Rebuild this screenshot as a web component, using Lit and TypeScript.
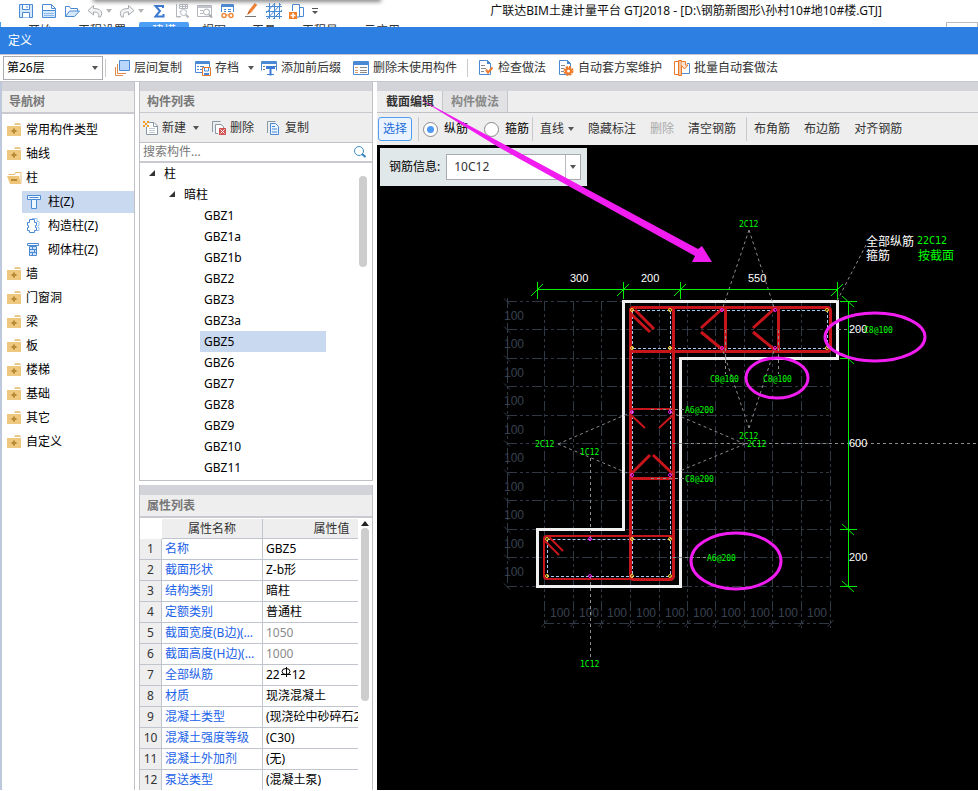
import { LitElement, html, svg, css, nothing } from "lit";
import { customElement, state } from "lit/decorators.js";
import { classMap } from "lit/directives/class-map.js";

const shared = css`
  * { box-sizing: border-box; }
  button, input, select {
    font: inherit; color: inherit; margin: 0; padding: 0;
    border: 0; background: none; border-radius: 0; outline: 0;
  }
  button { display: flex; align-items: center; white-space: nowrap; }
  svg { display: block; flex: none; }
`;

/* ---------- icons ---------- */
const ic = (body: unknown, w = 16, h = 16) =>
  html`<svg width=${w} height=${h} viewBox="0 0 ${w} ${h}" fill="none" aria-hidden="true">${body}</svg>`;

const B = "#4a8ad4";
const caret = html`<svg width="6" height="4" viewBox="0 0 6 4" aria-hidden="true"><path d="M0 0h6L3 4z" fill="#555"/></svg>`;
const caretPale = html`<svg width="6" height="4" viewBox="0 0 6 4" aria-hidden="true"><path d="M0 0h6L3 4z" fill="#b4b4b4"/></svg>`;
const caretBar = html`<svg width="6" height="7" viewBox="0 0 6 7" aria-hidden="true"><path d="M0 0h6v1H0zM0 3h6L3 6z" fill="#555"/></svg>`;

const icons = {
  save: ic(svg`<path d="M1.5 1.5h13v13h-13z" fill="#d6e8fc" stroke=${B}/><path d="M4.5 1.5h7v5h-7zM4.5 14.5v-5h7v5" fill="#fff" stroke=${B}/><path d="M9 3v2" stroke=${B}/>`),
  saveAs: ic(svg`<path d="M1.5 7.5v-6h9l4 4v2" fill="#fff" stroke=${B}/><path d="M10.5 1.5v4h4" stroke=${B}/><path d="M1.5 7.5h13v7h-13z" fill="#d6e8fc" stroke=${B}/><path d="M3 10.500h10M3 12.500h10" stroke="#8db9ea"/>`),
  open: ic(svg`<path d="M1.500 13.500V3.500h4l1 2h7v2.500" fill="#fff" stroke=${B}/><path d="M1.500 13.500l4-5.500h10l-5 5.500z" fill="#d6e8fc" stroke=${B}/>`),
  undo: ic(svg`<path d="M6.500 2.500l-5.500 5 5.500 4.500v-3c4 0 6 1 5 5h2c3-5 0-8.500-7-8.500z" fill="#f4f4f4" stroke="#a6abb2"/>`),
  redo: ic(svg`<path d="M9.500 2.500l5.500 5-5.500 4.500v-3c-4 0-6 1-5 5h-2c-3-5 0-8.500 7-8.500z" fill="#f4f4f4" stroke="#a6abb2"/>`),
  sigma: ic(svg`<path d="M12 5V3H4.500l4.500 5-4.500 5.500H12.500v-2.500" stroke="#3a78cf" stroke-width="2"/>`),
  tbl1: ic(svg`<path d="M2.500 1v13h4M2 13.500h5M5.500 1.500h8v4h-8zM5.500 8.500h3M5.500 3.500h8M8.500 1v4M11.500 1v4" stroke="#b3b7bd"/><circle cx="9.500" cy="9.500" r="3" fill="#fff" stroke="#b3b7bd"/><path d="M12 12l2.500 2.500" stroke="#b3b7bd" stroke-width="2"/>`),
  tbl2: ic(svg`<path d="M.5 2.500h14v11H.5z" stroke="#b3b7bd"/><path d="M1 3h13v2H1z" fill="#c2c6cb"/><path d="M3 7.500h3M3 10.500h3" stroke="#b3b7bd"/><circle cx="9.500" cy="9" r="3" fill="#fff" stroke="#a6abb2"/><path d="M12 11.500l3 3" stroke="#a6abb2" stroke-width="2"/>`),
  glasses: ic(svg`<path d="M1.500 9V1.500h12V9" stroke=${B}/><path d="M2 2h11v2H2z" fill=${B}/><path d="M4 6.500h2M8 6.500h3M4 8.500h2M8 8.500h3" stroke=${B}/><circle cx="4" cy="12.500" r="2" fill="#fff" stroke="#ee8a3c" stroke-width="1.500"/><circle cx="11" cy="12.500" r="2" fill="#fff" stroke="#ee8a3c" stroke-width="1.500"/><path d="M6 12h3" stroke="#ee8a3c"/>`),
  brush: ic(svg`<path d="M13 1L7 8.500" stroke="#ee8136" stroke-width="3"/><path d="M6 7.500l-2 4.500 4-2.500z" fill="#c55a1a"/><path d="M2 13.500h11" stroke="#777"/>`),
  grid: ic(svg`<path d="M0 3.500h16M0 8.500h16M0 13.500h16M3.500 0v16M8.500 0v16M13.500 0v16M0 10L9 0M1 16L15 1M7 16l9-9" stroke=${B}/>`),
  addDoc: ic(svg`<path d="M3.500 8V1.500h7V14H8" fill="#fff" stroke=${B}/><path d="M10.500 4.500h4v9h-4" stroke=${B}/><path d="M0 9h8v7H0z" fill="#f07f27"/><path d="M4 10v5M1.500 12.500h5" stroke="#fff" stroke-width="1.500"/>`),
  layerCopy: ic(svg`<path d="M5.500 .5h10v10h-10z" fill="#b9d6fa" stroke=${B}/><path d="M3.500 4v9.500H12M1.500 7v8.500H9" stroke="#e08a4c"/>`),
  archive: ic(svg`<path d="M.5 1.500h14v11H.5z" fill="#fff" stroke=${B}/><path d="M1 1h13v3H1z" fill=${B}/><path d="M2 6.500h2M5 6.500h4M2 9.500h2M5 9.500h2" stroke=${B}/><path d="M7.500 7.500h8v8h-8z" fill="#fff" stroke="#e07a30"/><path d="M9.500 8v3h4V8" stroke=${B}/><path d="M9 13h5v2H9z" fill=${B}/>`),
  prefix: ic(svg`<path d="M.5 10.500v-9h15v9" fill="#fff" stroke=${B}/><path d="M1 1h14v3H1z" fill=${B}/><path d="M2 6.500h2M2 9.500h2M13 6.500h2" stroke="#777"/><path d="M5 6h9v3h-3.500v6.500h-2V9H5z" fill="#3a7bd5"/><path d="M6 14.500h7" stroke="#3a7bd5"/>`),
  unused: ic(svg`<path d="M.5 1.500h15v13H.5z" fill="#fff" stroke=${B}/><path d="M1 1h14v4H1z" fill=${B}/><path d="M2 7.500h3M2 10.500h3M2 12.500h3" stroke="#d99a6a"/><path d="M7 7.500h7M7 10.500h7M7 12.500h7" stroke="#888"/>`),
  check: ic(svg`<path d="M1.500 .5h8l3 3v11h-11z" fill="#fff" stroke=${B}/><path d="M9 0l4 4H9z" fill=${B}/><path d="M3 5.500h4M3 8.500h5M3 11.500h3" stroke="#888"/><path d="M8 9.500l2 3 4.500-5" stroke="#f0792a" stroke-width="2"/>`),
  gearDoc: ic(svg`<path d="M1.500 .5h8l3 3v11h-11z" fill="#fff" stroke=${B}/><path d="M9 0l4 4H9z" fill=${B}/><path d="M3 5.500h4M3 8.500h3M3 11.500h3" stroke="#888"/><circle cx="10.500" cy="11" r="4" stroke="#f0792a" stroke-width="2" stroke-dasharray="2 1.140"/><circle cx="10.500" cy="11" r="2.500" fill="#fff" stroke="#f0792a" stroke-width="2"/>`),
  batch: ic(svg`<path d="M.5 1.500h4v13h-4z" fill="#fff" stroke="#ea7a2b"/><path d="M4.500 .5h3v15h-3z" fill="#f5c19a" stroke="#ea7a2b"/><path d="M8 13.500h7.500V3.500H13" stroke=${B}/><path d="M7.500 1.500h4V5h2.500l-3.500 4L7.500 5.500" fill="#fbe3d0" stroke="#ea7a2b"/>`),
  folder: ic(svg`<path d="M8 1h5v1H8zM7 2h7v1H7z" fill="#e9c98c"/><path d="M0 4h14v10H0z" fill="#efc880"/><path d="M7 6.500v5M4.500 9h5" stroke="#b98a36" stroke-width="2"/>`),
  folderOpen: ic(svg`<path d="M1.500 5V4.500h6l1-2h5.500v11" fill="#fff" stroke="#e8bd70"/><path d="M0 6h12l2 8H3z" fill="#efc57a"/><path d="M4 10h6" stroke="#b98a36" stroke-width="2"/>`),
  col: ic(svg`<path d="M1.500 1.500h13v4h-13z" fill="#eef6ff" stroke=${B}/><path d="M3.500 3.500h9" stroke=${B}/><path d="M5.500 5.500h5v9h-5z" fill="#eef6ff" stroke=${B}/>`),
  colStruct: ic(svg`<path d="M6 .5h5v3h2v4h-1v2h1v3h-2" stroke="#9cc3ee"/><path d="M3.500 1.500h5v3h2v3h-1v2h1v3h-2v2h-5v-2h-2v-3h1v-2h-1v-3h2z" fill="#fff" stroke=${B}/>`),
  colBrick: ic(svg`<path d="M1.500 1.500h11v2h-11z" fill="#fff" stroke=${B}/><path d="M3.500 4.500h7v9h-7z" fill="#cfe3fa" stroke=${B}/><path d="M4 7.500h6M4 10.500h6M6.500 5v2M8.500 8v2M6.500 11v2" stroke=${B}/>`),
  newDoc: ic(svg`<path d="M6 2.500h5l3.500 3.500v8.500h-11V7" fill="#fff" stroke="#8a99a8"/><path d="M10.500 2.500v4h4" stroke="#8a99a8"/><path d="M6 8.500h6M6 10.500h6M6 12.500h6" stroke="#c4cbd2"/><path d="M0 1h2v2H0zM4 1h2v2H4zM2 3h2v2H2zM0 5h2v2H0zM4 5h2v2H4z" fill="#f09a28"/>`),
  del: ic(svg`<path d="M1.500 12V1.500h8" stroke="#8a99a8"/><path d="M7 13.500H4.500v-9H10l2.500 2V8" fill="#fff" stroke="#8a99a8"/><path d="M8 8h7v7H8z" fill="#d25555"/><path d="M9.500 9.500l4 4M13.500 9.500l-4 4" stroke="#fff"/>`),
  copy: ic(svg`<path d="M1.500 13V1.500h8" stroke="#8a99a8"/><path d="M4.500 3.500h5l3 3v8h-8z" fill="#eaf3fe" stroke=${B}/><path d="M6 6.500h3M6 9h5M6 12h5" stroke=${B}/>`),
  search: ic(svg`<circle cx="7" cy="7" r="4.500" stroke="#3d8fc6"/><path d="M10 10l3.500 3" stroke="#2f83c0" stroke-width="2"/>`),
};

const rebarMark = html`<svg class="rebar" width="12" height="12" viewBox="0 0 12 12" fill="none" role="img" aria-label="C"><ellipse cx="6" cy="4.500" rx="4" ry="3" stroke="#000"/><path d="M6.500 0v10M1 7.500h10" stroke="#000"/></svg>`;

/* ---------- 导航树 ---------- */
@customElement("nav-tree")
class NavTree extends LitElement {
  @state() private selected = "柱(Z)";
  static styles = [shared, css`
    :host { display: flex; flex-direction: column; background: #fff; padding-top: 4px; }
    .row { width: 100%; height: 24px; padding-left: 5px; gap: 3px; color: #000; text-align: left; }
    .child { height: 22px; width: auto; margin: 1px 0 1px 20px; gap: 6px; padding-left: 4px; }
    .on { background: #c9d9f0; }
  `];
  private items: [string, keyof typeof icons, boolean][] = [
    ["常用构件类型", "folder", false], ["轴线", "folder", false], ["柱", "folderOpen", false],
    ["柱(Z)", "col", true], ["构造柱(Z)", "colStruct", true], ["砌体柱(Z)", "colBrick", true],
    ["墙", "folder", false], ["门窗洞", "folder", false], ["梁", "folder", false], ["板", "folder", false],
    ["楼梯", "folder", false], ["基础", "folder", false], ["其它", "folder", false], ["自定义", "folder", false],
  ];
  render() {
    return this.items.map(([t, i, child]) => html`<button
      class=${classMap({ row: true, child, on: t === this.selected })}
      @click=${() => (this.selected = t)}>${icons[i]}${t}</button>`);
  }
}

/* ---------- 构件列表 ---------- */
@customElement("member-list")
class MemberList extends LitElement {
  @state() private selected = "GBZ5";
  static styles = [shared, css`
    :host { display: flex; flex-direction: column; }
    .tools { display: flex; height: 30px; background: #eee; border-bottom: 1px solid #c0c1c6; padding-left: 3px; gap: 12px; color: #333; }
    .tools button { gap: 3px; }
    .tools .more { margin-left: 4px; }
    .search { display: flex; height: 20px; border-bottom: 2px solid #c9cacf; background: #fff; padding: 0 4px 0 3px; align-items: center; }
    .search input { flex: 1; min-width: 0; }
    .search input::placeholder { color: #777; opacity: 1; }
    .tree { display: flex; background: #fff; justify-content: space-between; color: #000; height: 317px; }
    .items { flex: 1; }
    .branch { height: 21px; gap: 8px; padding-left: 9px; }
    .sub { padding-left: 29px; }
    .leaf { height: 21px; width: 126px; margin-left: 60px; padding-left: 4px; }
    .on { background: #c9d9f0; }
    .thumb { width: 8px; height: 91px; margin: 13px 5px 0 0; border-radius: 4px; background: #cdcdcd; }
  `];
  render() {
    const tri = html`<svg width="7" height="7" viewBox="0 0 7 7" aria-hidden="true"><path d="M6 0v6H0z" fill="#333"/></svg>`;
    const names = ["GBZ1", "GBZ1a", "GBZ1b", "GBZ2", "GBZ3", "GBZ3a", "GBZ5", "GBZ6", "GBZ7", "GBZ8", "GBZ9", "GBZ10", "GBZ11"];
    return html`
      <div class="tools">
        <button>${icons.newDoc}新建<span class="more">${caret}</span></button>
        <button>${icons.del}删除</button>
        <button>${icons.copy}复制</button>
      </div>
      <div class="search"><input type="search" placeholder="搜索构件..." aria-label="搜索构件"><button aria-label="搜索">${icons.search}</button></div>
      <div class="tree">
        <div class="items">
          <button class="branch">${tri}柱</button>
          <button class="branch sub">${tri}暗柱</button>
          ${names.map((n) => html`<button class=${classMap({ leaf: true, on: n === this.selected })} @click=${() => (this.selected = n)}>${n}</button>`)}
        </div>
        <div class="thumb"></div>
      </div>`;
  }
}

/* ---------- 属性列表 ---------- */
@customElement("property-grid")
class PropertyGrid extends LitElement {
  static styles = [shared, css`
    :host { display: flex; background: #fff; overflow: hidden; padding-top: 1px; }
    .clip { flex: 1; overflow: hidden; }
    table { width: 261px; table-layout: fixed; border-collapse: separate; border-spacing: 0; }
    .num { width: 22px; }
    .name { width: 101px; }
    th, td { height: 21px; padding: 0; font-weight: 400; border-right: 1px solid #c0c4cc; border-bottom: 1px solid #c0c4cc; white-space: nowrap; overflow: hidden; text-overflow: ellipsis; line-height: 20px; }
    thead th { height: 20px; line-height: 19px; background: #eee; color: #333; }
    thead td { height: 20px; line-height: 19px; border-color: #fff; }
    tbody th { background: #eee; color: #333; text-align: center; }
    tbody td { padding-left: 3px; color: #000; }
    tbody .key { color: #1b62e8; }
    tbody .dim { color: #8a8a8a; }
    .rebar { display: inline-block; vertical-align: 0; }
    .bar { width: 14px; display: flex; flex-direction: column; align-items: center; padding-top: 2px; gap: 2px; }
    .thumb { width: 8px; height: 173px; border-radius: 4px; background: #cdcdcd; }
  `];
  render() {
    const rows: [string, unknown, boolean?][] = [
      ["名称", "GBZ5"], ["截面形状", "Z-b形"], ["结构类别", "暗柱"], ["定额类别", "普通柱"],
      ["截面宽度(B边)(mm)", "1050", true], ["截面高度(H边)(mm)", "1000", true],
      ["全部纵筋", html`22${rebarMark}12`], ["材质", "现浇混凝土"], ["混凝土类型", "(现浇砼中砂碎石20mm)"],
      ["混凝土强度等级", "(C30)"], ["混凝土外加剂", "(无)"], ["泵送类型", "(混凝土泵)"],
    ];
    return html`
      <div class="clip"><table>
        <colgroup><col class="num"><col class="name"><col></colgroup>
        <thead><tr><td></td><th>属性名称</th><th>属性值</th></tr></thead>
        <tbody>${rows.map(([k, v, dim], i) => html`<tr><th>${i + 1}</th><td class="key">${k}</td><td class=${dim ? "dim" : nothing}>${v}</td></tr>`)}</tbody>
      </table></div>
      <div class="bar"><svg width="8" height="5" viewBox="0 0 8 5" aria-hidden="true"><path d="M0 5h8L4 0z" fill="#222"/></svg><div class="thumb"></div></div>`;
  }
}

/* ---------- 截面编辑画布 ---------- */
const XS = [544, 573, 601, 630, 659, 687, 715, 744, 772, 801, 830];
const YS = [301, 329, 358, 386, 415, 443, 472, 500, 529, 557, 586];

@customElement("section-canvas")
class SectionCanvas extends LitElement {
  static styles = [shared, css`
    :host { display: block; position: relative; background: #000; min-height: 560px; }
    .cad, .marks { position: absolute; inset: 0; width: 100%; height: 100%; }
    .marks { overflow: visible; pointer-events: none; }
    text { dominant-baseline: central; }
    .grid { stroke: #303844; stroke-dasharray: 10 3 3 3 3 3; fill: none; }
    .tick { stroke: #303844; fill: none; }
    .gray { fill: #39424f; font: 12px "Liberation Sans", sans-serif; }
    .wall { stroke: #f0f0f0; stroke-width: 3; fill: none; }
    .bar { stroke: #c8151c; stroke-width: 3; fill: none; }
    .thin { stroke-width: 2; }
    .core { stroke: #a9c8f2; stroke-dasharray: 3 2; fill: none; }
    .dimn { stroke: #00f000; fill: none; }
    .lead { stroke: #8c8c8c; stroke-dasharray: 3 3; fill: none; }
    .y { stroke: #ffd92e; fill: none; }
    .m { stroke: #f01cf0; fill: none; }
    .num { fill: #fff; font: 11px "Liberation Sans", sans-serif; }
    .tag { fill: #00ff00; font: 8px "DejaVu Sans Mono", monospace; }
    .mono { fill: #00ff00; font: 10px "DejaVu Sans Mono", monospace; }
    .cn { fill: #fff; font: 12px "Noto Sans CJK SC", sans-serif; }
    .g { fill: #00ff00; }
    .pink { stroke: #f01cf0; stroke-width: 3; fill: none; }
    .arrow { fill: #f01cf0; }
    .info { position: relative; display: inline-flex; align-items: center; margin: 3px; height: 38px; padding: 0 6px 0 9px; gap: 6px; background: #e1e8ea; color: #000; }
    .combo { display: flex; width: 135px; height: 26px; border: 1px solid #a9abb0; background: #fff; }
    .combo input { flex: 1; min-width: 0; padding-left: 7px; color: #333; }
    .combo button { width: 15px; justify-content: center; border-left: 1px solid #b9bbc0; }
  `];
  private tags: [string, number, number][] = [
    ["2C12", 739, 224], ["C8@100", 710, 379], ["C8@100", 763, 379], ["C8@100", 864, 330],
    ["A6@200", 685, 410], ["2C12", 739, 436], ["2C12", 747, 444], ["C8@200", 685, 479],
    ["2C12", 535, 444], ["1C12", 580, 452], ["A6@200", 707, 558], ["1C12", 580, 664],
  ];
  render() {
    const yellow = [[632, 310], [670, 310], [632, 348], [670, 348], [827, 310], [827, 348], [547, 539], [632, 539], [670, 539], [547, 576], [632, 576], [670, 576]];
    const magenta = [[722, 310], [722, 348], [775, 310], [775, 348], [632, 412], [670, 412], [632, 475], [670, 475], [590, 539], [590, 576]];
    return html`
      <svg class="cad" role="img" aria-label="柱截面">
        <g transform="translate(-377 -145)">
          ${XS.map((x) => svg`<path class="grid" d="M${x}.5 301V628"/><path class="tick" d="M${x - 3}.5 627l6-7"/>`)}
          ${YS.map((y) => svg`<path class="grid" d="M507 ${y}.5H830"/><path class="tick" d="M504 ${y - 3}.5l6 6"/>`)}
          <path class="grid" d="M507.5 298V588M544 623.5H830"/>
          ${YS.slice(0, 10).map((y) => svg`<text class="gray" x="504" y=${y + 15}>100</text>`)}
          ${XS.slice(0, 10).map((x) => svg`<text class="gray" x=${x + 6} y="613">100</text>`)}
          <path class="wall" d="M623.5 301.5H837.5V358.5H680.5V586.5H537.5V529.5H623.5Z"/>
          <path class="core" d="M632 310.5H827.5V348.5H632M632.5 311V576.5M670.5 311V576.5M547.5 539.5H670M547.5 540V576.5H670"/>
          <rect class="bar" x="630.5" y="307.5" width="200" height="44" rx="3"/>
          <rect class="bar" x="630.5" y="307.5" width="43" height="272" rx="3"/>
          <rect class="bar thin" x="544" y="536" width="129" height="43" rx="3"/>
          <path class="bar" d="M725.5 308V351M778.5 308V351M722 309L701 328M701 332L723 350M774 309L753 328M753 332L775 350M635 310L654 329M630 313L650 332M631 478.5H673M632 473L650 455M653 455L672 473"/>
          <path class="bar thin" d="M631 409H673M631 415L645 428M673 415L659 428M549 537L563 551M545 541L559 555"/>
          <path class="lead" d="M749 230L722 310M749 230L775 310M749 428L722 348M749 428L775 348M725.5 330V374M778.5 330V374M838 329.5H864M651 409.5H685M651 478.5H685M673 557.5H707M558 444L632 412M558 444L632 475M745 444L670 412M745 444L670 475M673 443.5H2000M590.5 458V539M590.5 576V657M866 245L837 301"/>
          ${yellow.map(([x, y]) => svg`<circle class="y" cx=${x} cy=${y} r="1.5"/>`)}
          ${magenta.map(([x, y]) => svg`<circle class="m" cx=${x} cy=${y} r="1.5"/>`)}
          <path class="dimn" d="M537 289.5H838M848.5 301V587"/>
          ${[537, 623, 680, 837].map((x) => svg`<path class="dimn" d="M${x}.5 282V299M${x - 6} 296L${x + 6} 284"/>`)}
          ${[301, 358, 529, 586].map((y) => svg`<path class="dimn" d="M840 ${y}.5H857M842 ${y - 5}L854 ${y + 6}"/>`)}
          <text class="num" x="570" y="278">300</text><text class="num" x="641" y="278">200</text><text class="num" x="748" y="278">550</text>
          <text class="num" x="849" y="329">200</text><text class="num" x="849" y="443">600</text><text class="num" x="849" y="557">200</text>
          ${this.tags.map(([t, x, y]) => svg`<text class="tag" x=${x} y=${y}>${t}</text>`)}
          <text class="cn" x="866" y="240">全部纵筋</text><text class="cn" x="866" y="254">箍筋</text>
          <text class="mono" x="917" y="240">22C12</text><text class="cn g" x="918" y="254">按截面</text>
        </g>
      </svg>
      <div class="info">
        <label for="rebar">钢筋信息:</label>
        <div class="combo"><input id="rebar" .value=${"10C12"}><button aria-label="选择钢筋">${caret}</button></div>
      </div>
      <svg class="marks" aria-hidden="true">
        <g transform="translate(-377 -145)">
          <ellipse class="pink" cx="875" cy="337" rx="50" ry="24"/>
          <ellipse class="pink" cx="777" cy="378" rx="31" ry="20"/>
          <ellipse class="pink" cx="736" cy="561" rx="45" ry="28"/>
          <path class="arrow" d="M418 98L698 249L702 246L712 262L692 262L695 256L500 148Z"/>
        </g>
      </svg>`;
  }
}

/* ---------- 主界面 ---------- */
@customElement("app-root")
class AppRoot extends LitElement {
  @state() private tab = 0;
  static styles = [shared, css`
    :host { display: flex; flex-direction: column; min-height: 100vh; box-sizing: border-box; padding-bottom: 1px; background: #fff; color: #222; overflow: hidden; position: relative; font: 12px/18px "Noto Sans", "Noto Sans CJK SC", sans-serif; }
    .shade { position: absolute; top: -8px; left: 94px; width: 286px; height: 8px; box-shadow: 0 1px 4px 1px #888; }
    .quick { display: flex; align-items: center; height: 22px; padding: 0 96px 0 18px; }
    .quick .tools { display: flex; align-items: center; gap: 7px; }
    .quick .more { margin-left: 3px; }
    .caption { margin-left: auto; color: #111; white-space: nowrap; }
    .ribbon { display: flex; height: 5px; overflow: hidden; padding-left: 14px; color: #333; border-left: 1px solid #4ba0ee; }
    .ribbon button { flex: none; height: 18px; padding: 0 13px; align-self: flex-start; }
    .ribbon .cur { background: #4d9ff5; color: #fff; border-radius: 2px 2px 0 0; }
    .ribbon input { margin-left: auto; flex: none; width: 32px; height: 20px; border: 1px solid #bbb; }
    .title { height: 27px; background: #2d7fe2; color: #fff; padding-left: 8px; line-height: 27px; font-weight: 400; font-size: 12px; margin: 0; }
    .bar { display: flex; align-items: center; height: 28px; border-top: 1px solid #c3c6cc; border-bottom: 1px solid #c3c6cc; padding-left: 3px; background: #fff; color: #333; }
    .bar button { height: 22px; padding: 0 6px; gap: 4px; }
    .bar .tail { padding: 0 1px 0 7px; }
    .more { margin-left: 5px; }
    .pick { display: grid; align-items: center; width: 100px; height: 24px; border: 1px solid #aaacb0; }
    .pick select { grid-area: 1 / 1; appearance: none; width: 100%; height: 100%; padding-left: 3px; color: #000; }
    .pick svg { grid-area: 1 / 1; justify-self: end; margin-right: 4px; pointer-events: none; }
    .sep { width: 1px; height: 18px; background: #c8c9cd; flex: none; margin: 0 4px; }
    .pick + .sep { margin: 0 2px; }
    .body { flex: 1; display: flex; border-left: 2px solid #bdc8dc; }
    .side, .mid { display: flex; flex-direction: column; border-right: 1px solid #c0c1c6; margin-right: 4px; flex: none; }
    .side { width: 133px; }
    .mid { width: 234px; border-left: 1px solid #c0c1c6; }
    .band { height: 9px; background: #d3d4da; flex: none; }
    h2 { margin: 0; height: 23px; font-size: 12px; line-height: 21px; font-weight: 700; color: #777; background: #eee; padding-left: 7px; border-bottom: 2px solid #c9cacf; flex: none; }
    .one { height: 22px; border-bottom-width: 1px; }
    .gap { height: 5px; margin: 0 -1px; background: #fff; border-top: 1px solid #c0c1c6; flex: none; }
    .gap + .band { height: 10px; }
    nav-tree, property-grid, section-canvas { flex: 1; }
    property-grid { flex-basis: 272px; }
    .right { flex: 1; min-width: 0; display: flex; flex-direction: column; }
    .tabs { display: flex; height: 22px; background: #eee; border-bottom: 1px solid #c0c1c6; padding-left: 1px; }
    .tabs button { width: 65px; justify-content: center; font-weight: 700; color: #888; background: #e2e2e4; border-right: 1px solid #c6c7cc; }
    .tabs .cur { background: #eee; color: #333; }
    .edit { display: flex; align-items: center; height: 32px; background: #eee; padding-left: 1px; flex: none; white-space: nowrap; color: #333; }
    .edit button { height: 24px; padding: 0 7px; }
    .edit .more { margin-left: 4px; }
    .edit .sel { width: 34px; padding: 0; justify-content: center; border: 1px solid #4f9ff0; border-radius: 3px; background: #eaf3fe; color: #1b6fd8; margin-right: 3px; }
    .edit button:disabled { color: #aaa; }
    .edit .sep { height: 24px; margin: 0 0 0 3px; }
    .edit label { display: flex; align-items: center; gap: 6px; color: #000; margin: 0 12px 0 4px; }
    .edit .last { margin-right: 0; }
    .edit input { appearance: none; width: 15px; height: 15px; border-radius: 8px; border: 1px solid #888; background: #fff; display: grid; place-items: center; }
    .edit input:checked::before { content: ""; width: 7px; height: 7px; border-radius: 4px; background: #4d9bf5; }
  `];
  render() {
    return html`
      <div class="quick">
        <div class="tools">
          <button aria-label="保存">${icons.save}</button><button aria-label="另存为">${icons.saveAs}</button><button aria-label="打开">${icons.open}</button>
          <button aria-label="撤销">${icons.undo}<span class="more">${caretPale}</span></button>
          <button aria-label="恢复">${icons.redo}<span class="more">${caretPale}</span></button>
          <button aria-label="汇总">${icons.sigma}</button><button aria-label="查看">${icons.tbl1}</button><button aria-label="查找">${icons.tbl2}</button>
          <button aria-label="预览">${icons.glasses}</button><button aria-label="格式刷">${icons.brush}</button><button aria-label="轴网">${icons.grid}</button>
          <button aria-label="新增">${icons.addDoc}</button><button aria-label="更多">${caretBar}</button>
        </div>
        <div class="caption">广联达BIM土建计量平台 GTJ2018 - [D:\\钢筋新图形\\孙村10#地10#楼.GTJ]</div>
      </div>
      <div class="shade"></div>
      <div class="ribbon">
        ${["开始", "工程设置", "建模", "视图", "工具", "工程量", "云应用"].map((t) => html`<button class=${classMap({ cur: t === "建模" })}>${t}</button>`)}
        <input aria-label="搜索功能">
      </div>
      <h1 class="title">定义</h1>
      <div class="bar">
        <div class="pick"><select aria-label="楼层"><option>第26层</option></select>${caret}</div>
        <span class="sep"></span>
        <button>${icons.layerCopy}层间复制</button>
        <button class="tail">${icons.archive}存档<span class="more">${caret}</span></button>
        <button>${icons.prefix}添加前后缀</button>
        <button>${icons.unused}删除未使用构件</button>
        <span class="sep"></span>
        <button>${icons.check}检查做法</button>
        <button>${icons.gearDoc}自动套方案维护</button>
        <button>${icons.batch}批量自动套做法</button>
      </div>
      <div class="body">
        <div class="side"><div class="band"></div><h2>导航树</h2><nav-tree></nav-tree></div>
        <div class="mid">
          <div class="band"></div><h2 class="one">构件列表</h2><member-list></member-list>
          <div class="gap"></div>
          <div class="band"></div><h2>属性列表</h2><property-grid></property-grid>
        </div>
        <div class="right">
          <div class="band"></div>
          <div class="tabs">${["截面编辑", "构件做法"].map((t, i) => html`<button class=${classMap({ cur: i === this.tab })} @click=${() => (this.tab = i)}>${t}</button>`)}</div>
          <div class="edit">
            <button class="sel">选择</button><span class="sep"></span>
            <label><input type="radio" name="kind" checked>纵筋</label>
            <label class="last"><input type="radio" name="kind">箍筋</label><span class="sep"></span>
            <button>直线<span class="more">${caret}</span></button>
            <button>隐藏标注</button><button disabled>删除</button><button>清空钢筋</button><span class="sep"></span>
            <button>布角筋</button><button>布边筋</button><button>对齐钢筋</button>
          </div>
          <section-canvas></section-canvas>
        </div>
      </div>`;
  }
}
